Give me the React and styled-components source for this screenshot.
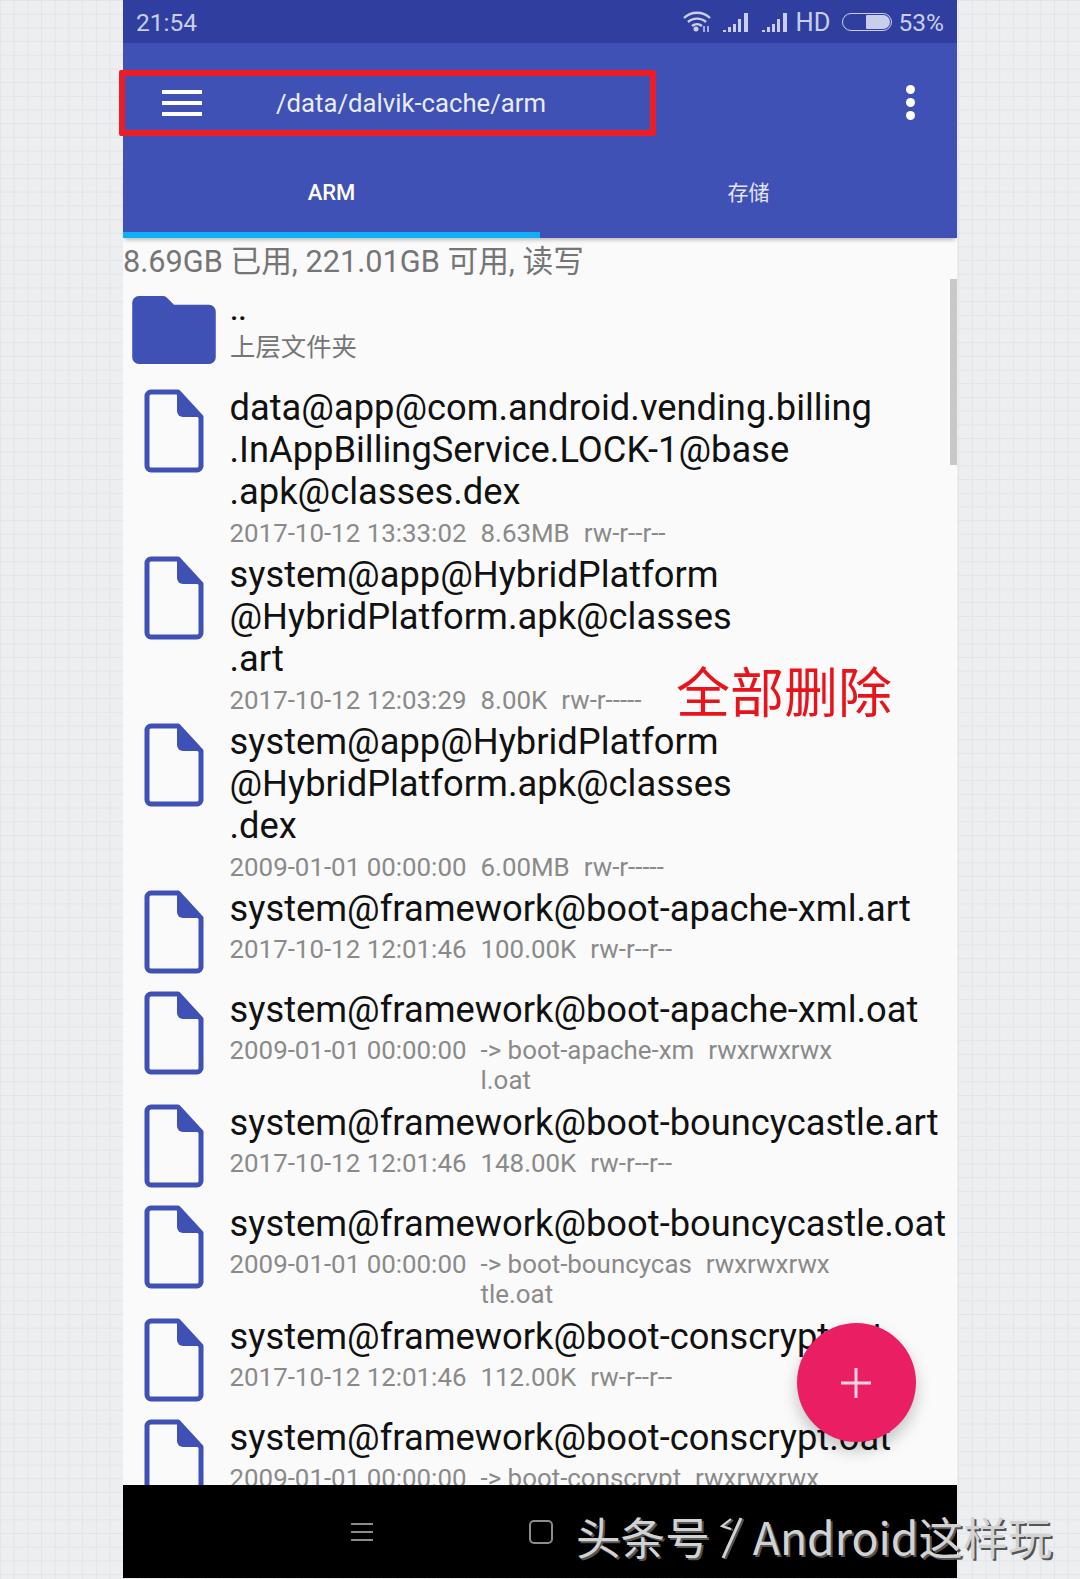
import React from 'react';
import styled, { createGlobalStyle } from 'styled-components';

const GlobalStyle = createGlobalStyle`
  html, body {
    margin: 0;
    padding: 0;
    height: 1579px;
    overflow: hidden;
  }
  body {
    background-color: #eceef0;
    background-image:
      linear-gradient(to right, #e2e4e7 1px, transparent 1px),
      linear-gradient(to bottom, #e2e4e7 1px, transparent 1px);
    background-size: 13.7px 13.7px;
    font-family: Roboto, "Noto Sans CJK SC", sans-serif;
  }
`;

const files = [
  { lines: ['data@app@com.android.vending.billing', '.InAppBillingService.LOCK-1@base', '.apk@classes.dex'], date: '2017-10-12 13:33:02', size: '8.63MB', perm: 'rw-r--r--', height: 167 },
  { lines: ['system@app@HybridPlatform', '@HybridPlatform.apk@classes', '.art'], date: '2017-10-12 12:03:29', size: '8.00K', perm: 'rw-r-----', height: 167 },
  { lines: ['system@app@HybridPlatform', '@HybridPlatform.apk@classes', '.dex'], date: '2009-01-01 00:00:00', size: '6.00MB', perm: 'rw-r-----', height: 167 },
  { lines: ['system@framework@boot-apache-xml.art'], date: '2017-10-12 12:01:46', size: '100.00K', perm: 'rw-r--r--', height: 101 },
  { lines: ['system@framework@boot-apache-xml.oat'], date: '2009-01-01 00:00:00', size: ['-> boot-apache-xm', 'l.oat'], perm: 'rwxrwxrwx', height: 113 },
  { lines: ['system@framework@boot-bouncycastle.art'], date: '2017-10-12 12:01:46', size: '148.00K', perm: 'rw-r--r--', height: 101 },
  { lines: ['system@framework@boot-bouncycastle.oat'], date: '2009-01-01 00:00:00', size: ['-> boot-bouncycas', 'tle.oat'], perm: 'rwxrwxrwx', height: 113 },
  { lines: ['system@framework@boot-conscrypt.art'], date: '2017-10-12 12:01:46', size: '112.00K', perm: 'rw-r--r--', height: 101 },
  { lines: ['system@framework@boot-conscrypt.oat'], date: '2009-01-01 00:00:00', size: '-> boot-conscrypt', perm: 'rwxrwxrwx', height: 113 },
];

const FileIcon = () => (
  <FileSvg viewBox="0 0 60 84">
    <path d="M8 3h26l23 25v49a4 4 0 0 1-4 4H7a4 4 0 0 1-4-4V7a4 4 0 0 1 4-4z" fill="none" stroke="#3f51b5" strokeWidth="5" strokeLinejoin="round" />
    <path d="M33 3l24 25H39a6 6 0 0 1-6-6z" fill="#3f51b5" />
  </FileSvg>
);

const FolderIcon = () => (
  <FolderSvg viewBox="0 0 86 70">
    <path d="M7 0h25a5 5 0 0 1 4 2l7 7h36a7 7 0 0 1 7 7v47a7 7 0 0 1-7 7H7a7 7 0 0 1-7-7V7a7 7 0 0 1 7-7z" fill="#3f51b5" />
  </FolderSvg>
);

const SignalIcon = () => (
  <SignalSvg width="27" height="20" viewBox="0 0 27 20" fill="#c9cfea">
    <path d="M0 18h3v2H0zM5 15h3v5H5zM10 12h3v8h-3zM15 7h3v13h-3zM21 1h4v19h-4z" />
  </SignalSvg>
);

const WifiIcon = () => (
  <WifiSvg width="28" height="22" viewBox="0 0 28 22" fill="none" stroke="#c9cfea" strokeWidth="2.400">
    <path d="M1 7c7-7 19-7 26 0" />
    <path d="M5 11c5-4.500 13-4.500 18 0" />
    <path d="M9 15c3-2.500 7-2.500 10 0" />
    <circle cx="13" cy="18" r="2.500" fill="#c9cfea" stroke="none" />
    <path d="M21 15v6M25 15v6" strokeWidth="1.500" />
  </WifiSvg>
);

const LogoMark = () => (
  <LogoSvg width="24" height="44" viewBox="0 0 24 44" fill="none" stroke="#d2d2d2" strokeWidth="3">
    <path d="M22 3L4 43" />
    <path d="M12 4L3 11l9 3" strokeWidth="2.200" />
  </LogoSvg>
);

const App = () => (
  <>
    <GlobalStyle />
    <Phone>
      <StatusBar>
        <span>21:54</span>
        <StatusRight>
          <WifiIcon />
          <SignalIcon />
          <SignalIcon />
          <HdText>HD</HdText>
          <Battery><BatteryFill /></Battery>
          <span>53%</span>
        </StatusRight>
      </StatusBar>
      <Toolbar>
        <MenuButton>
          <MenuLine /><MenuLine /><MenuLine />
        </MenuButton>
        <PathText>/data/dalvik-cache/arm</PathText>
        <MoreButton>
          <Dot /><Dot /><Dot />
        </MoreButton>
      </Toolbar>
      <Tabs>
        <Tab $active>ARM</Tab>
        <Tab>存储</Tab>
      </Tabs>
      <ListArea>
        <Usage>8.69GB 已用, 221.01GB 可用, 读写</Usage>
        <ParentRow>
          <FolderIcon />
          <ParentText>
            <ParentName>..</ParentName>
            <ParentLabel>上层文件夹</ParentLabel>
          </ParentText>
        </ParentRow>
        {files.map((f) => (
          <FileRow key={f.lines[0]} $h={f.height}>
            <IconCell><FileIcon /></IconCell>
            <div>
              <FileName>{f.lines.map((l) => <div key={l}>{l}</div>)}</FileName>
              <Meta>
                <span>{f.date}</span>
                <div>{Array.isArray(f.size) ? f.size.map((s) => <div key={s}>{s}</div>) : f.size}</div>
                <span>{f.perm}</span>
              </Meta>
            </div>
          </FileRow>
        ))}
        <ScrollThumb />
      </ListArea>
      <NavBar>
        <NavMenu><NavLine /><NavLine /><NavLine /></NavMenu>
        <NavSquare />
      </NavBar>
      <RedBox />
      <Note>全部删除</Note>
      <Fab>
        <svg width="30" height="30" viewBox="0 0 30 30" stroke="#fbd3e1" strokeWidth="3"><path d="M15 0v30M0 15h30" /></svg>
      </Fab>
      <Watermark>头条号<LogoMark />Android这样玩</Watermark>
    </Phone>
  </>
);

const Phone = styled.div`
  position: relative;
  width: 834px;
  height: 1578px;
  margin-left: 123px;
  display: flex;
  flex-direction: column;
  background: #fafafa;
`;

const StatusBar = styled.div`
  height: 43px;
  flex: none;
  background: #303f9f;
  color: #c9cfea;
  font-size: 24.5px;
  padding: 1px 13px 0;
  display: flex;
  justify-content: space-between;
  align-items: center;
  box-sizing: border-box;
`;

const StatusRight = styled.div`
  display: flex;
  align-items: center;
  gap: 10px;
`;

const WifiSvg = styled.svg`
  margin-right: 2px;
`;

const SignalSvg = styled.svg`
  & + & {
    margin-left: 2px;
  }
`;

const HdText = styled.span`
  margin-left: -3px;
  font-size: 25.5px;
`;

const Battery = styled.div`
  width: 50px;
  height: 18px;
  border: 1.5px solid #c9cfea;
  border-radius: 10px;
  box-sizing: border-box;
  display: flex;
  justify-content: flex-end;
  padding: 1px;
  margin: 0 -3px 0 1px;
`;

const BatteryFill = styled.div`
  width: 24px;
  background: #c9cfea;
  border-radius: 1px 7px 7px 1px;
`;

const Toolbar = styled.div`
  height: 119px;
  flex: none;
  background: #3f51b5;
  display: flex;
  align-items: center;
  padding: 0 42px 0 39px;
`;

const MenuButton = styled.div`
  width: 40px;
  display: flex;
  flex-direction: column;
  gap: 7px;
`;

const MenuLine = styled.div`
  height: 4px;
  background: #fff;
`;

const PathText = styled.div`
  margin-left: 74px;
  flex: 1;
  color: #e9ebf7;
  font-size: 25.7px;
`;

const MoreButton = styled.div`
  display: flex;
  flex-direction: column;
  gap: 4px;
`;

const Dot = styled.div`
  width: 9px;
  height: 9px;
  border-radius: 50%;
  background: #fff;
`;

const Tabs = styled.div`
  height: 76px;
  flex: none;
  display: flex;
  background: #3f51b5;
  box-shadow: 0 4px 4px -2px rgba(0, 0, 0, 0.25);
  z-index: 1;
`;

const Tab = styled.div`
  flex: 1;
  display: flex;
  align-items: center;
  justify-content: center;
  padding-bottom: ${(p) => (p.$active ? 10 : 13)}px;
  color: ${(p) => (p.$active ? '#fff' : '#e2e5f4')};
  font-size: ${(p) => (p.$active ? 22 : 21)}px;
  font-weight: ${(p) => (p.$active ? 500 : 400)};
  border-bottom: 6px solid ${(p) => (p.$active ? '#0fb0f5' : 'transparent')};
`;

const ListArea = styled.div`
  position: relative;
  flex: 1;
  min-height: 0;
  overflow: hidden;
`;

const Usage = styled.div`
  height: 49px;
  line-height: 48px;
  font-size: 30.7px;
  color: #757575;
  white-space: nowrap;
`;

const ParentRow = styled.div`
  height: 99px;
  box-sizing: border-box;
  display: flex;
  align-items: flex-start;
  padding: 9px 0 0 8px;
`;

const FolderSvg = styled.svg`
  width: 86px;
  height: 68px;
  flex: none;
`;

const ParentText = styled.div`
  margin: -3.500px 0 0 13px;
`;

const ParentName = styled.div`
  font-size: 30px;
  font-weight: 500;
  line-height: 34px;
  color: #111;
  margin-bottom: 2px;
`;

const ParentLabel = styled.div`
  font-size: 25.4px;
  line-height: 36px;
  color: #757575;
`;

const FileRow = styled.div`
  height: ${(p) => p.$h}px;
  display: flex;
  flex: none;
`;

const IconCell = styled.div`
  width: 106.500px;
  flex: none;
  display: flex;
  justify-content: center;
  padding: 3px 5.500px 0 0;
  box-sizing: border-box;
`;

const FileSvg = styled.svg`
  width: 60px;
  height: 84px;
`;

const FileName = styled.div`
  font-size: 36.3px;
  line-height: 42.3px;
  padding-top: 0.500px;
  color: #111;
  white-space: nowrap;
`;

const Meta = styled.div`
  display: flex;
  gap: 14px;
  font-size: 25.9px;
  line-height: 30px;
  color: #8a8a8a;
  margin-top: 4.500px;
`;

const ScrollThumb = styled.div`
  position: absolute;
  top: 41px;
  right: 0;
  width: 7px;
  height: 186px;
  background: #c8c8c8;
`;

const NavBar = styled.div`
  height: 93px;
  flex: none;
  background: #000;
  display: flex;
  align-items: center;
  padding-left: 228px;
  gap: 156px;
`;

const NavMenu = styled.div`
  width: 22px;
  display: flex;
  flex-direction: column;
  gap: 6px;
`;

const NavLine = styled.div`
  height: 2px;
  background: #8c8c8c;
`;

const NavSquare = styled.div`
  width: 20px;
  height: 20px;
  border: 2px solid #8c8c8c;
  border-radius: 5px;
`;

const RedBox = styled.div`
  position: absolute;
  left: -4px;
  top: 70px;
  width: 537px;
  height: 66px;
  border: 6px solid #ee1c25;
  border-radius: 2px;
  box-sizing: border-box;
`;

const Note = styled.div`
  position: absolute;
  left: 553px;
  top: 660px;
  font-size: 54px;
  line-height: 70px;
  color: #e8141c;
`;

const Fab = styled.div`
  position: absolute;
  left: 673.500px;
  top: 1323px;
  width: 119px;
  height: 119px;
  border-radius: 50%;
  background: #e91e63;
  box-shadow: 0 8px 16px rgba(0, 0, 0, 0.22);
  display: flex;
  align-items: center;
  justify-content: center;
`;

const Watermark = styled.div`
  position: absolute;
  left: 453px;
  top: 1506px;
  display: flex;
  align-items: center;
  font-family: "Noto Sans CJK SC", sans-serif;
  font-size: 44.6px;
  line-height: 60px;
  white-space: nowrap;
  color: #d2d2d2;
  text-shadow: 2px 2px 0 #555;
`;

const LogoSvg = styled.svg`
  margin: 2px 10px 0 9px;
  filter: drop-shadow(2px 1px 0 #555);
`;

export default App;
